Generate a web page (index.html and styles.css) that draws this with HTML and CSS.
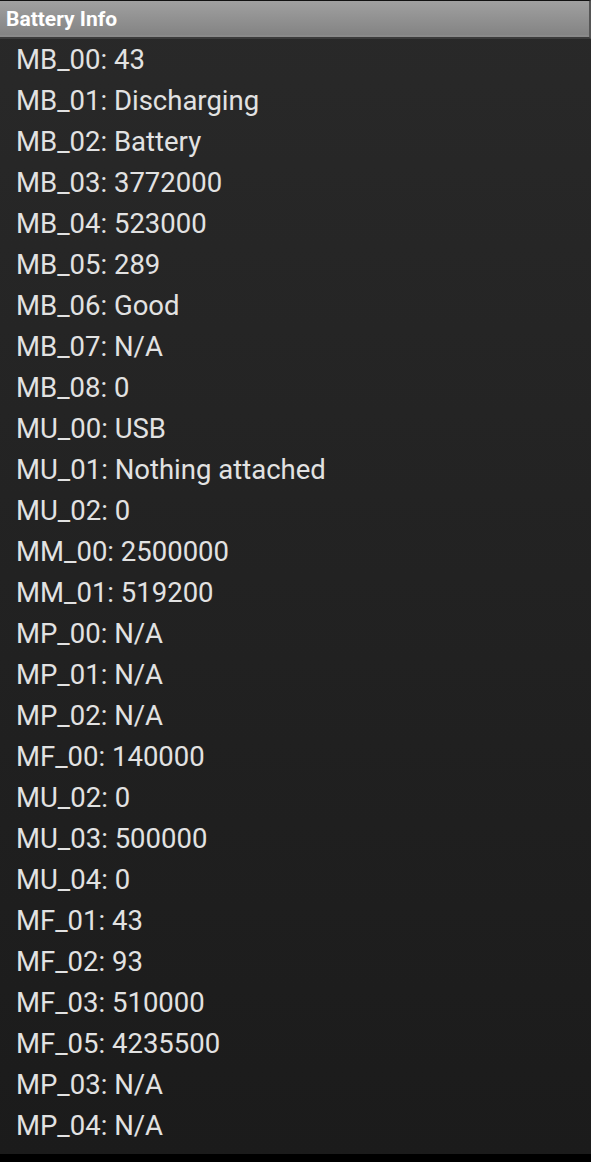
FILE: index.html
```html
<!DOCTYPE html>
<html lang="en">
<head>
    <meta charset="UTF-8">
    <meta name="viewport" content="width=device-width, initial-scale=1.0">
    <title>Battery Info</title>
    <link rel="stylesheet" href="styles.css">
</head>

<body>
    <div class="screen">
        <div class="title-bar">Battery Info</div>

        <div class="info-list">
            <div class="info-row">MB_00: 43</div>
            <div class="info-row">MB_01: Discharging</div>
            <div class="info-row">MB_02: Battery</div>
            <div class="info-row">MB_03: 3772000</div>
            <div class="info-row">MB_04: 523000</div>
            <div class="info-row">MB_05: 289</div>
            <div class="info-row">MB_06: Good</div>
            <div class="info-row">MB_07: N/A</div>
            <div class="info-row">MB_08: 0</div>
            <div class="info-row">MU_00: USB</div>
            <div class="info-row">MU_01: Nothing attached</div>
            <div class="info-row">MU_02: 0</div>
            <div class="info-row">MM_00: 2500000</div>
            <div class="info-row">MM_01: 519200</div>
            <div class="info-row">MP_00: N/A</div>
            <div class="info-row">MP_01: N/A</div>
            <div class="info-row">MP_02: N/A</div>
            <div class="info-row">MF_00: 140000</div>
            <div class="info-row">MU_02: 0</div>
            <div class="info-row">MU_03: 500000</div>
            <div class="info-row">MU_04: 0</div>
            <div class="info-row">MF_01: 43</div>
            <div class="info-row">MF_02: 93</div>
            <div class="info-row">MF_03: 510000</div>
            <div class="info-row">MF_05: 4235500</div>
            <div class="info-row">MP_03: N/A</div>
            <div class="info-row">MP_04: N/A</div>
        </div>
    </div>
</body>

</html>
```

FILE: styles.css
```css
* {
    box-sizing: border-box;
}

body {
    margin: 0;
    background: #000;
    font-family: Roboto, "Liberation Sans", sans-serif;
}

.screen {
    display: flex;
    flex-direction: column;
    height: 1154px;
    background-image: linear-gradient(to bottom, #292929, #1b1b1b);
}

.title-bar {
    height: 39px;
    padding: 6px 6px 0 6px;
    border-top: 1px solid #111;
    border-right: 2px solid #555;
    border-bottom: 2px solid #3c3c3c;
    box-shadow: inset 0 -2px 0 #8a8a8a;
    background-image: linear-gradient(to bottom, #a0a0a0, #828282);
    color: #fff;
    font-size: 21px;
    font-weight: bold;
}

.info-list {
    display: flex;
    flex-direction: column;
    padding: 0 0 0 16px;
}

.info-row {
    height: 41px;
    line-height: 41px;
    color: #e2e2e2;
    font-size: 27.5px;
}
```
